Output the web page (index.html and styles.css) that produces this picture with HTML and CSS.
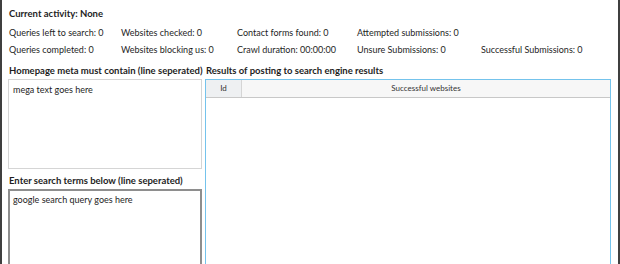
FILE: index.html
```html
<!DOCTYPE html>
<html lang="en">
  <head>
    <meta charset="UTF-8" />
    <title>Poster</title>
    <link rel="stylesheet" href="styles.css">
  </head>
  <body>
    <div class="window">
      <div class="status">
        <div class="activity">Current activity: None</div>
        <div class="stats">
          <span>Queries left to search: 0</span>
          <span>Websites checked: 0</span>
          <span>Contact forms found: 0</span>
          <span>Attempted submissions: 0</span>
          <span></span>
          <span>Queries completed: 0</span>
          <span>Websites blocking us: 0</span>
          <span>Crawl duration: 00:00:00</span>
          <span>Unsure Submissions: 0</span>
          <span>Successful Submissions: 0</span>
        </div>
      </div>
      <div class="panes">
        <div class="left">
          <div class="label">Homepage meta must contain (line seperated)</div>
          <div class="box meta">mega text goes here</div>
          <div class="label second">Enter search terms below (line seperated)</div>
          <div class="box terms">google search query goes here</div>
        </div>
        <div class="right">
          <div class="label">Results of posting to search engine results</div>
          <div class="grid">
            <div class="grid-head">
              <div class="col-id">Id</div>
              <div class="col-site">Successful websites</div>
            </div>
          </div>
        </div>
      </div>
    </div>
  </body>
</html>
```

FILE: styles.css
```css
body {
  margin: 0;
  font-family: Lato, "Noto Sans", sans-serif;
  font-size: 9px;
  color: #1e1e1e;
  background: #fff;
}

.window {
  height: 264px;
  overflow: hidden;
  border-left: 2px solid #3f3f3f;
  border-right: 2px solid #3f3f3f;
  box-sizing: border-box;
}

.status {
  padding: 5px 0 0 7px;
}
.activity {
  font-weight: bold;
  font-size: 9.5px;
  line-height: 17px;
  margin-bottom: 2px;
}
.stats {
  display: grid;
  grid-template-columns: 112px 116px 120px 124px auto;
  line-height: 17px;
}
.stats span {
  white-space: nowrap;
}

.panes {
  display: flex;
  gap: 3px;
  padding: 4px 0 0 6px;
}
.left {
  width: 194px;
}
.right {
  width: 406px;
}
.label {
  font-weight: bold;
  font-size: 9.5px;
  line-height: 17px;
  padding-left: 1px;
  white-space: nowrap;
}
.label.second {
  margin-top: 3px;
}
.box {
  box-sizing: border-box;
  padding: 2px 4px;
  line-height: 15px;
}
.meta {
  height: 90px;
  border: 1px solid #d5d5d5;
}
.terms {
  height: 120px;
  border: 2px solid #8e8e8e;
  padding: 1px 3px;
}

.grid {
  height: 200px;
  border: 1px solid #74c3ec;
}
.grid-head {
  display: flex;
  height: 17px;
  line-height: 17px;
  font-size: 8px;
  color: #333;
  border-bottom: 1px solid #c8c8c8;
}
.col-id {
  width: 35px;
  text-align: center;
  background: #eef0f2;
}
.col-site {
  flex: 1;
  text-align: center;
  background: #f7f7f7;
  border-left: 1px solid #d5d5d5;
}
```
